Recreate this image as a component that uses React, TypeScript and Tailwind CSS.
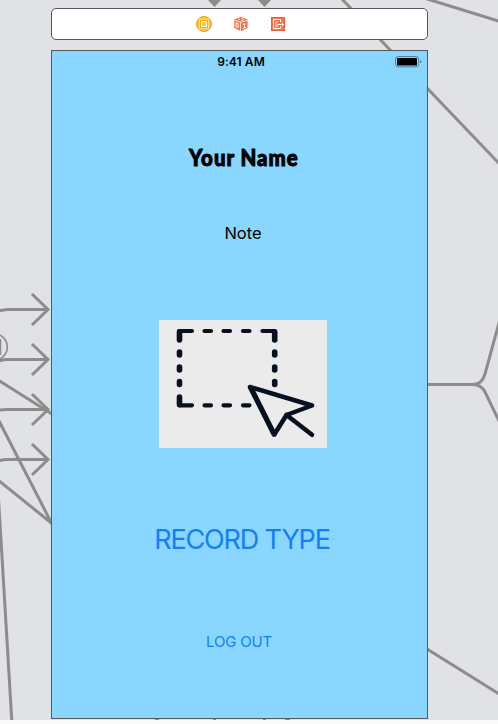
const segues = [
  'M-4 312Q0 310 8 309.500H48',
  'M-6 364Q-1 359.500 7 359.500H48',
  'M-4 411Q0 409.500 8 409.500H48',
  'M-4 462Q0 459.500 8 459.500H48',
  'M32 294L48 309.500L32 325',
  'M32 344L48 359.500L32 375',
  'M32 394L48 409.500L32 425',
  'M32 444L48 459.500L32 475',
  'M-2 380L52 414',
  'M-2 419L52 524',
  'M-2 480L52 523.500',
  'M-2 490L12 724',
  'M341 -2L392 52',
  'M424 -2L500 21.500',
  'M427 88L500 164.500',
  'M427 384.500H473Q482 384.500 485 374L500 319',
  'M427 384.500H473Q481 384.500 485 392L500 423',
  'M427 649L500 694.500',
];

function Canvas() {
  return (
    <svg className="absolute inset-0" width="498" height="720" fill="none" stroke="#8c8c8d" strokeWidth="3">
      {segues.map((d) => (
        <path key={d} d={d} />
      ))}
      <circle cx="-6" cy="347" r="13.300" strokeWidth="1.600" />
      <path d="M.5 339V355" strokeWidth="1.500" />
      <path d="M208 0H221L214.500 7ZM258 0H271L264.500 7Z" fill="#8c8c8d" stroke="none" />
      <path d="M155 719.500h4M213 719.500h3M263 719.500h3M285 719.500h5" strokeWidth="1" />
    </svg>
  );
}

function ControllerIcon() {
  return (
    <svg width="16" height="16" viewBox="0 0 16 16" fill="none">
      <circle cx="8" cy="8" r="7.500" fill="#fdc52e" stroke="#dfa51d" />
      <rect x="3.500" y="3.500" width="9" height="9" stroke="#fbe08f" strokeWidth="1" fill="#edaa1c" />
      <rect x="5.500" y="5.500" width="5" height="5" stroke="#fff" strokeWidth="1" fill="#fdc52e" />
    </svg>
  );
}

function ResponderIcon() {
  return (
    <svg width="16" height="16" viewBox="0 0 16 16" fill="none">
      <path d="M8 .8L14.600 3.400V12L8 15.200L1.200 12V3.400Z" fill="#f9734a" />
      <path d="M1.400 4.200L7.500 6.300V15M7.500 6.300L14.600 4.200" stroke="#fff" strokeWidth=".8" />
      <path d="M5 2.900L7 3.600M8.500 2L10.500 2.700M8.500 4.500L10.500 3.800" stroke="#fff" strokeWidth=".8" />
      <path d="M3 6.800V10.500L5.200 11.500V7.800ZM10 8.500L11.500 7.700V11.900M10 12.500L13 11.200" stroke="#fff" strokeWidth="1" />
    </svg>
  );
}

function ExitIcon() {
  return (
    <svg width="14" height="14" viewBox="0 0 14 14" fill="none">
      <rect width="14" height="14" fill="#f9734a" />
      <rect x=".5" y=".5" width="13" height="13" stroke="#e95f39" />
      <path d="M9.500 5V2.500H2.500V11.500H9.500V9.500M6.500 7.500H12.500M10.800 5.700L12.600 7.500L10.800 9.300" stroke="#fff" strokeWidth="1" />
      <path d="M6.500 5H5V9.500H6.500" stroke="#fff" strokeWidth=".8" />
    </svg>
  );
}

function Battery() {
  return (
    <svg width="28" height="12" viewBox="0 0 28 12" fill="none">
      <rect x=".6" y=".6" width="23" height="10.300" rx="2.500" stroke="#4d7f9b" strokeWidth="1" />
      <rect x="2" y="2" width="20" height="7.500" rx=".8" fill="#000" />
      <path d="M25 4.200Q26.500 4.600 26.500 5.700T25 7.300Z" fill="#467c99" />
    </svg>
  );
}

function SelectionPicture() {
  return (
    <svg width="168" height="128" viewBox="0 0 168 128" fill="none" stroke="#07101f" strokeLinecap="round" strokeLinejoin="round">
      <g strokeWidth="4.200">
        <path d="M20 11H33M45.500 11H52M64.500 11H71M84 11H90.500M103.500 11H116" />
        <path d="M20 85.300H33M45.500 85.300H52M64.500 85.300H71M84 85.300H90.500" />
      </g>
      <g strokeWidth="5.600">
        <path d="M20.500 12V20M20.500 32V35M20.500 47V50M20.500 61.500V64.500M20.500 77V84.500" />
        <path d="M115.700 12V20M115.700 32V35M115.700 47V50M115.700 61.500V64.500" />
      </g>
      <g strokeWidth="4.500">
        <path d="M91 67L153 85.500L127.500 95L115.300 114.500Z" />
        <path d="M127.500 95L153 114.800" />
      </g>
      <path d="M92 68L115 114" strokeWidth="5.200" />
    </svg>
  );
}

export default function App() {
  return (
    <div className="relative h-[724px] w-[498px] overflow-hidden bg-[#fafafa] font-['Inter','Liberation_Sans',sans-serif]">
      <div className="relative flex h-[720px] flex-col items-center bg-[#e1e2e6] pr-[19px] pt-2">
        <Canvas />
        <header className="relative flex h-8 w-[377px] shrink-0 items-center justify-center rounded-[5px] border border-[#58585a] bg-white pl-[2px]">
          <ControllerIcon />
          <span className="ml-[21px]"><ResponderIcon /></span>
          <span className="ml-[22px]"><ExitIcon /></span>
        </header>
        <main className="relative mt-2.5 flex h-[669px] w-[377px] shrink-0 flex-col items-center border border-[#58585a] bg-[#89d6ff]">
          <div className="grid h-[21px] w-full grid-cols-[1fr_auto_1fr] items-center pl-[7px] pr-1">
            <span />
            <time className="whitespace-nowrap text-[12px] font-semibold leading-5 tracking-[0.1px]">9:41 AM</time>
            <span className="justify-self-end"><Battery /></span>
          </div>
          <div className="flex flex-col items-center pl-[7px]">
            <h1 className="mt-[69px] h-8 scale-x-[0.87] whitespace-nowrap pl-0.5 font-['Lato',sans-serif] text-[23.5px] font-black leading-8 tracking-[1.1px] [-webkit-text-stroke:1px_black]">Your Name</h1>
            <p className="mt-12 h-6 text-[16.5px] leading-6">Note</p>
            <div className="mt-[75px] h-32 w-[168px] shrink-0 bg-[#ebebeb]"><SelectionPicture /></div>
            <button className="mt-[72px] h-10 whitespace-nowrap pr-0.5 text-[27px] leading-10 tracking-[-1.15px] text-[#147efb]">RECORD TYPE</button>
            <button className="mt-[70px] mr-[8px] h-6 whitespace-nowrap text-[15px] leading-6 tracking-[-0.2px] text-[#147efb]">LOG OUT</button>
          </div>
        </main>
      </div>
    </div>
  );
}
